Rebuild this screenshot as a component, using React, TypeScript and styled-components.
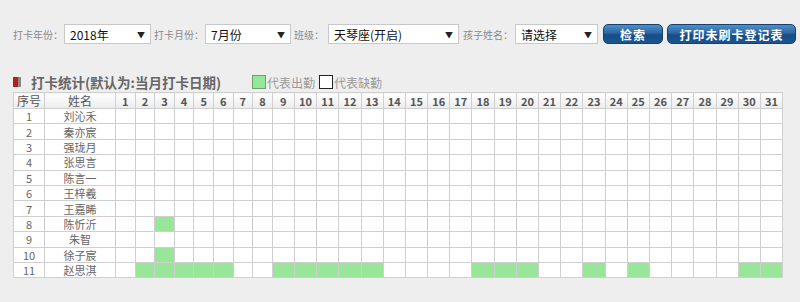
import React from 'react';
import styled, { createGlobalStyle } from 'styled-components';

const GlobalStyle = createGlobalStyle`
  html, body {
    margin: 0;
    padding: 0;
    background: #eeeeee;
    font-family: "Noto Sans CJK SC", "Noto Sans", sans-serif;
  }
`;

const Page = styled.div`
  width: 800px;
  height: 302px;
  box-sizing: border-box;
  padding: 24px 0 0 13px;
  background: #eeeeee;
`;

const Toolbar = styled.div`
  display: flex;
  align-items: center;
  height: 20px;
`;

const Label = styled.span<{ $gap?: number; $after?: number }>`
  font-size: 10px;
  color: #8a8a8a;
  margin: 0 ${({ $after }) => $after ?? 1}px 0 ${({ $gap }) => $gap ?? 0}px;
  white-space: nowrap;
`;

const FakeSelect = styled.div<{ $w: number }>`
  width: ${({ $w }) => $w}px;
  height: 20px;
  box-sizing: border-box;
  display: flex;
  align-items: center;
  justify-content: space-between;
  padding: 0 5px 0 5px;
  background: #fff;
  border: 1px solid #c8c8c8;
  font-size: 12px;
  color: #111;
`;

const Arrow = styled.span`
  font-size: 8px;
  color: #222;
`;

const Button = styled.div<{ $w: number; $gap: number }>`
  width: ${({ $w }) => $w}px;
  height: 20px;
  margin-left: ${({ $gap }) => $gap}px;
  box-sizing: border-box;
  display: flex;
  align-items: center;
  justify-content: center;
  border: 1px solid #17406a;
  border-radius: 5px;
  background: linear-gradient(#4f8fcb 0%, #2a66a3 45%, #174d85 55%, #1b5690 100%);
  color: #fff;
  font-size: 12px;
  font-weight: bold;
  letter-spacing: 1px;
`;

const TitleRow = styled.div`
  display: flex;
  align-items: center;
  margin-top: 29px;
  height: 18px;
`;

const Marker = styled.span`
  display: inline-block;
  width: 5px;
  height: 10px;
  background: #b41e23;
  border-right: 3px solid #888;
  margin-right: 10px;
`;

const Title = styled.span`
  font-size: 13.5px;
  font-weight: bold;
  color: #666;
  white-space: nowrap;
`;

const Legend = styled.span<{ $gap: number }>`
  display: flex;
  align-items: center;
  margin-left: ${({ $gap }) => $gap}px;
  font-size: 12px;
  color: #999;
`;

const Swatch = styled.span<{ $on: boolean }>`
  display: inline-block;
  width: 14px;
  height: 14px;
  box-sizing: border-box;
  background: ${({ $on }) => ($on ? '#97e69a' : '#fff')};
  border: 1px solid ${({ $on }) => ($on ? '#6aa36c' : '#222')};
  margin-right: 1px;
`;

const Table = styled.table`
  margin-top: 1px;
  border-collapse: collapse;
  table-layout: fixed;
  width: 769px;
  background: #fff;
  font-size: 11px;
`;

const HeadCell = styled.th<{ $w: number }>`
  width: ${({ $w }) => $w - 1}px;
  height: 15px;
  padding: 0;
  border: 1px solid #cfcfcf;
  background: linear-gradient(#ffffff, #ececec);
  color: #555;
  font-weight: ${({ $w }) => ($w < 30 ? 'bold' : 'normal')};
  font-size: ${({ $w }) => ($w < 30 ? 11 : 12)}px;
  text-align: center;
  line-height: 14px;
  overflow: hidden;
`;

const Cell = styled.td<{ $on?: boolean }>`
  height: 14.4px;
  padding: 0;
  border: 1px solid #cfcfcf;
  background: ${({ $on }) => ($on ? '#97e69a' : '#fff')};
  color: #666;
  text-align: center;
  line-height: 14px;
  font-size: 11px;
`;

const students = [
  '刘沁禾', '秦亦宸', '强珑月', '张思言', '陈言一', '王梓羲',
  '王嘉睎', '陈忻沂', '朱智', '徐子宸', '赵思淇',
];

const attended: Record<number, number[]> = {
  8: [3],
  10: [3],
  11: [2, 3, 4, 5, 6, 9, 10, 11, 12, 13, 18, 19, 20, 23, 25, 30, 31],
};

const days = Array.from({ length: 31 }, (_, i) => i + 1);
const dayWidth = (d: number) => (d <= 8 ? 19.6 : 22.2);

export default function App() {
  return (
    <Page>
      <GlobalStyle />
      <Toolbar>
        <Label>打卡年份：</Label>
        <FakeSelect $w={87}>2018年<Arrow>▼</Arrow></FakeSelect>
        <Label $gap={3}>打卡月份：</Label>
        <FakeSelect $w={86}>7月份<Arrow>▼</Arrow></FakeSelect>
        <Label $gap={3} $after={4}>班级：</Label>
        <FakeSelect $w={131}>天琴座(开启)<Arrow>▼</Arrow></FakeSelect>
        <Label $gap={4} $after={2}>孩子姓名：</Label>
        <FakeSelect $w={83}>请选择<Arrow>▼</Arrow></FakeSelect>
        <Button $w={60} $gap={5}>检索</Button>
        <Button $w={129} $gap={4}>打印未刷卡登记表</Button>
      </Toolbar>

      <TitleRow>
        <Marker />
        <Title>打卡统计(默认为:当月打卡日期)</Title>
        <Legend $gap={31}><Swatch $on />代表出勤</Legend>
        <Legend $gap={4}><Swatch $on={false} />代表缺勤</Legend>
      </TitleRow>

      <Table>
        <thead>
          <tr>
            <HeadCell $w={31}>序号</HeadCell>
            <HeadCell $w={71}>姓名</HeadCell>
            {days.map((d) => (
              <HeadCell key={d} $w={dayWidth(d)}>{d}</HeadCell>
            ))}
          </tr>
        </thead>
        <tbody>
          {students.map((name, i) => {
            const no = i + 1;
            const on = attended[no] ?? [];
            return (
              <tr key={no}>
                <Cell>{no}</Cell>
                <Cell>{name}</Cell>
                {days.map((d) => (
                  <Cell key={d} $on={on.includes(d)} />
                ))}
              </tr>
            );
          })}
        </tbody>
      </Table>
    </Page>
  );
}
